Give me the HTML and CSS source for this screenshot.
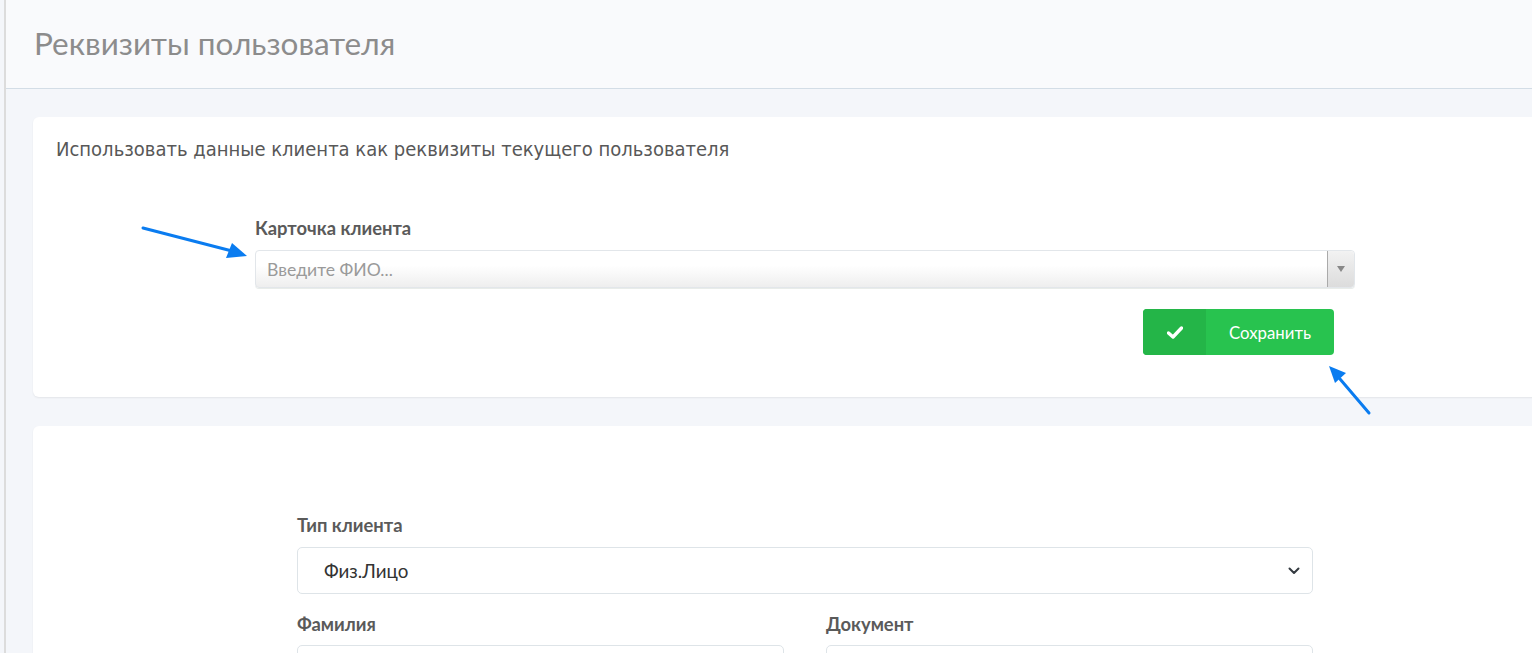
FILE: index.html
```html
<!DOCTYPE html>
<html lang="ru">
<head>
<meta charset="utf-8">
<title>Реквизиты пользователя</title>
<link rel="stylesheet" href="styles.css">
</head>
<body>
<div class="layout">
  <div class="edge"></div>
  <main class="main">
    <header class="page-header">
      <h1 class="page-title">Реквизиты пользователя</h1>
    </header>
    <section class="content">
      <div class="card card-top">
        <p class="card-lead">Использовать данные клиента как реквизиты текущего пользователя</p>
        <div class="form-block">
          <label class="field-label">Карточка клиента</label>
          <div class="s2">
            <span class="s2-text">Введите ФИО...</span>
            <span class="s2-arrow"><span class="tri"></span></span>
          </div>
          <div class="actions">
            <button class="btn-save" type="button">
              <span class="btn-icon">
                <svg width="16" height="13" viewBox="0 0 16 13"><path d="M1.5 7 L6 11 L14.5 2" fill="none" stroke="#fff" stroke-width="3.4" stroke-linecap="round" stroke-linejoin="round"/></svg>
              </span>
              <span class="btn-text">Сохранить</span>
            </button>
          </div>
        </div>
      </div>
      <div class="card card-bottom">
        <div class="form2">
          <label class="field-label">Тип клиента</label>
          <div class="select">
            <span class="select-text">Физ.Лицо</span>
            <svg class="chev" width="12" height="8" viewBox="0 0 12 8"><path d="M1.5 1.5 L6 6 L10.5 1.5" fill="none" stroke="#343a40" stroke-width="2" stroke-linecap="round" stroke-linejoin="round"/></svg>
          </div>
          <div class="row2">
            <div class="col">
              <label class="field-label">Фамилия</label>
              <div class="input"></div>
            </div>
            <div class="col">
              <label class="field-label">Документ</label>
              <div class="input"></div>
            </div>
          </div>
        </div>
      </div>
    </section>
  </main>
</div>
<svg class="annot" width="1532" height="653" viewBox="0 0 1532 653">
  <g stroke="#0a7cf0" stroke-width="3" stroke-linecap="round" fill="none">
    <line x1="143" y1="228" x2="232" y2="251"/>
    <line x1="1369" y1="413" x2="1340" y2="379"/>
  </g>
  <g fill="#0a7cf0">
    <polygon points="247,256 226,258 232,243"/>
    <polygon points="1329,366 1346,373 1335,383"/>
  </g>
</svg>
</body>
</html>
```

FILE: styles.css
```css
html, body {
  margin: 0;
  padding: 0;
  height: 100%;
  overflow: hidden;
}
body {
  background: #f4f6fa;
  font-family: "Lato", "Open Sans", sans-serif;
  color: #555;
  position: relative;
}
.layout {
  display: flex;
  min-height: 653px;
}
.edge {
  width: 4px;
  flex: 0 0 4px;
  background: #f4f6fa;
  border-right: 2px solid #dcdcdc;
}
.main {
  flex: 1;
  min-width: 0;
}
.page-header {
  height: 89px;
  background: #f9fafc;
  border-bottom: 1px solid #d3dde6;
  display: flex;
  align-items: center;
  padding-left: 28px;
  padding-bottom: 2px;
  box-sizing: border-box;
}
.page-title {
  margin: 0;
  font-weight: 400;
  font-size: 31.5px;
  color: #8c8c8c;
}
.content {
  padding: 28px 0 0 27px;
}
.card {
  background: #fff;
  border-radius: 6px;
  width: 1560px;
  box-shadow: 0 1px 2px rgba(0,0,0,0.07);
}
.card-top {
  height: 280px;
  box-sizing: border-box;
  padding: 19px 0 0 23px;
}
.card-lead {
  margin: 0;
  font-family: "DejaVu Sans Condensed", "DejaVu Sans", sans-serif;
  font-size: 20px;
  color: #585858;
  line-height: 26px;
}
.form-block {
  margin: 55px 0 0 199px;
  width: 1100px;
}
.field-label {
  display: block;
  font-weight: 700;
  font-size: 18.4px;
  color: #5a5a5a;
  line-height: 22px;
  margin-bottom: 11px;
}
.s2 {
  height: 38px;
  box-sizing: border-box;
  border: 1px solid #e2e6ea;
  border-radius: 4px;
  background: linear-gradient(#ffffff 40%, #eeeeee);
  display: flex;
  align-items: center;
  box-shadow: 0 1px 0 #e8ece9;
}
.s2-text {
  flex: 1;
  padding-left: 11px;
  font-size: 17.6px;
  color: #9a9a9a;
}
.s2-arrow {
  width: 26px;
  height: 36px;
  border-left: 1px solid #aaa;
  background: linear-gradient(#f2f2f2, #dcdcdc);
  border-radius: 0 4px 4px 0;
  display: flex;
  align-items: center;
  justify-content: center;
}
.tri {
  width: 0;
  height: 0;
  border-left: 4px solid transparent;
  border-right: 4px solid transparent;
  border-top: 6px solid #888;
}
.actions {
  display: flex;
  justify-content: flex-end;
  padding-right: 21px;
  margin-top: 21px;
}
.btn-save {
  display: flex;
  height: 46px;
  width: 191px;
  padding: 0;
  border: 0;
  border-radius: 4px;
  background: #28c34f;
  overflow: hidden;
  cursor: pointer;
  font-family: "Lato", "Open Sans", sans-serif;
}
.btn-icon {
  width: 63px;
  background: #24b548;
  display: flex;
  align-items: center;
  justify-content: center;
}
.btn-text {
  flex: 1;
  display: flex;
  align-items: center;
  justify-content: center;
  color: #fff;
  font-size: 16.8px;
}
.card-bottom {
  margin-top: 29px;
  height: 300px;
  box-sizing: border-box;
  padding: 88px 0 0 264px;
}
.form2 {
  width: 1016px;
}
.select {
  height: 47px;
  box-sizing: border-box;
  border: 1px solid #dee4e8;
  border-radius: 5px;
  display: flex;
  align-items: center;
  padding: 0 12px 0 26px;
}
.select-text {
  flex: 1;
  font-size: 18.8px;
  color: #333;
}
.row2 {
  display: flex;
  gap: 42px;
  margin-top: 19px;
}
.col {
  flex: 1;
}
.row2 .field-label {
  margin-bottom: 10px;
}
.input {
  height: 40px;
  border: 1px solid #dee4e8;
  border-radius: 5px;
}
.annot {
  position: absolute;
  left: 0;
  top: 0;
  pointer-events: none;
}
```
